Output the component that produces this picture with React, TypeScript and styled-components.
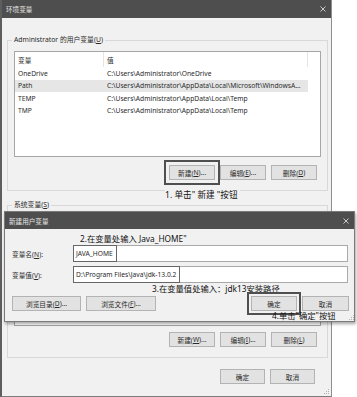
import styled, { createGlobalStyle } from 'styled-components';

const GlobalStyle = createGlobalStyle`
  html, body {
    margin: 0;
    padding: 0;
    background: #ffffff;
  }
  body {
    font-family: "Noto Sans", "Noto Sans CJK SC", sans-serif;
    color: #2a2a2a;
  }
`;

const Page = styled.div`
  position: relative;
  width: 357px;
  height: 397px;
  overflow: hidden;
  background: #ffffff;
`;

const Window = styled.div`
  width: 332px;
  height: 397px;
  box-sizing: border-box;
  border-left: 2px solid #5e5e5e;
  border-right: 1px solid #8f8f8f;
  border-bottom: 1px solid #7c7c7c;
  background: #f1f1f1;
  display: flex;
  flex-direction: column;
`;

const TitleBar = styled.div<{ $height: number }>`
  flex: none;
  height: ${(p) => p.$height}px;
  background: #4e4e4e;
  color: #e6e6e6;
  font-size: 6.6px;
  display: flex;
  align-items: center;
  justify-content: space-between;
  padding: 0 5px 0 4px;
`;

const Body = styled.div`
  display: flex;
  flex-direction: column;
  padding: 17px 3px 0 5px;
`;

const Group = styled.fieldset<{ $gap?: number }>`
  margin: ${(p) => p.$gap ?? 0}px 0 0 0;
  padding: 0 6px 10px 6px;
  border: 1px solid #d8d8d8;
  min-width: 0;
`;

const Legend = styled.legend`
  font-size: 6.8px;
  line-height: 10px;
  padding: 0 2px;
  margin-left: -2px;
  color: #2a2a2a;
`;

const ListBox = styled.div<{ $height: number }>`
  margin-top: 6px;
  height: ${(p) => p.$height}px;
  border: 1px solid #a6a6a6;
  background: #ffffff;
  box-sizing: border-box;
`;

const ListRow = styled.div<{ $header?: boolean; $selected?: boolean }>`
  display: grid;
  grid-template-columns: 89px 204px;
  height: ${(p) => (p.$header ? 15 : 12.5)}px;
  align-items: center;
  font-size: 6.7px;
  background: ${(p) => (p.$selected ? '#e6e6e6' : 'transparent')};
  width: 293px;
`;

const Cell = styled.div<{ $divider?: boolean }>`
  height: 100%;
  display: flex;
  align-items: center;
  padding-left: 3px;
  white-space: nowrap;
  overflow: hidden;
  border-right: ${(p) => (p.$divider ? '1px solid #e4e4e4' : 'none')};
`;

const ButtonRow = styled.div<{ $top: number; $right?: number }>`
  display: flex;
  justify-content: flex-end;
  gap: 5px;
  margin-top: ${(p) => p.$top}px;
  padding-right: ${(p) => p.$right ?? 4}px;
`;

const Button = styled.div<{ $width?: number; $focus?: number }>`
  width: ${(p) => p.$width ?? 46}px;
  height: 15px;
  box-sizing: border-box;
  border: 1px solid #b3b3b3;
  background: #e2e2e2;
  font-size: 6.7px;
  display: flex;
  align-items: center;
  justify-content: center;
  white-space: nowrap;
  color: #2a2a2a;
  outline: ${(p) => (p.$focus !== undefined ? '2px solid #4f4f4f' : 'none')};
  outline-offset: ${(p) => p.$focus ?? 0}px;
`;

const Dialog = styled.div`
  position: absolute;
  left: 4px;
  top: 211px;
  width: 351px;
  height: 111px;
  box-sizing: border-box;
  border: 1px solid #7a7a7a;
  background: #f1f1f1;
  box-shadow: 1px 2px 3px rgba(0, 0, 0, 0.35);
  display: flex;
  flex-direction: column;
`;

const DialogBody = styled.div`
  display: flex;
  flex-direction: column;
  padding: 0 5px 0 7px;
`;

const Note = styled.div<{ $left: number; $height: number; $top?: number }>`
  height: ${(p) => p.$height}px;
  line-height: ${(p) => p.$height}px;
  margin-top: ${(p) => p.$top ?? 0}px;
  padding-left: ${(p) => p.$left}px;
  font-size: 8.3px;
  color: #111111;
  white-space: nowrap;
`;

const FieldRow = styled.div<{ $top: number }>`
  display: flex;
  align-items: center;
  height: 17px;
  margin-top: ${(p) => p.$top}px;
`;

const FieldLabel = styled.div`
  width: 61px;
  font-size: 6.7px;
`;

const Input = styled.div`
  width: 275px;
  height: 17px;
  box-sizing: border-box;
  border: 1px solid #a9a9a9;
  background: #ffffff;
  font-size: 6.7px;
  display: flex;
  align-items: stretch;
`;

const Marked = styled.span`
  display: flex;
  align-items: center;
  padding: 0 3px 0 2px;
  outline: 1.5px solid #666666;
  outline-offset: 0;
  white-space: nowrap;
`;

const DialogButtons = styled.div`
  display: flex;
  align-items: center;
  gap: 5px;
  margin-top: 2px;
`;

const Spacer = styled.div`
  flex: 1;
`;

const BottomNote = styled.div`
  position: absolute;
  left: 165px;
  top: 189px;
  font-size: 8.6px;
  line-height: 12px;
  color: #111111;
  background: #f1f1f1;
  padding-right: 2px;
  white-space: nowrap;
`;

const Grip = styled.svg`
  position: absolute;
`;

const Close = () => (
  <svg width="6" height="6" viewBox="0 0 6 6">
    <path d="M0.5 0.5 L5.5 5.5 M5.5 0.5 L0.5 5.5" stroke="#d8d8d8" strokeWidth="0.9" />
  </svg>
);

const GripDots = ({ x, y }: { x: number; y: number }) => (
  <Grip width="6" height="6" viewBox="0 0 6 6" style={{ left: x, top: y }}>
    <rect x="4" y="0" width="1" height="1" fill="#b0b0b0" />
    <rect x="2" y="2" width="1" height="1" fill="#b0b0b0" />
    <rect x="4" y="2" width="1" height="1" fill="#b0b0b0" />
    <rect x="0" y="4" width="1" height="1" fill="#b0b0b0" />
    <rect x="2" y="4" width="1" height="1" fill="#b0b0b0" />
    <rect x="4" y="4" width="1" height="1" fill="#b0b0b0" />
  </Grip>
);

const userVars = [
  { name: 'OneDrive', value: 'C:\\Users\\Administrator\\OneDrive' },
  { name: 'Path', value: 'C:\\Users\\Administrator\\AppData\\Local\\Microsoft\\WindowsA...' },
  { name: 'TEMP', value: 'C:\\Users\\Administrator\\AppData\\Local\\Temp' },
  { name: 'TMP', value: 'C:\\Users\\Administrator\\AppData\\Local\\Temp' },
];

const App = () => {
  return (
    <Page>
      <GlobalStyle />
      <Window>
        <TitleBar $height={18}>
          <span>环境变量</span>
          <Close />
        </TitleBar>
        <Body>
          <Group>
            <Legend>
              Administrator 的用户变量(<u>U</u>)
            </Legend>
            <ListBox $height={106}>
              <ListRow $header>
                <Cell $divider>变量</Cell>
                <Cell $divider>值</Cell>
              </ListRow>
              {userVars.map((v) => (
                <ListRow key={v.name} $selected={v.name === 'Path'}>
                  <Cell>{v.name}</Cell>
                  <Cell>{v.value}</Cell>
                </ListRow>
              ))}
            </ListBox>
            <ButtonRow $top={8}>
              <Button $focus={3}>
                新建(<u>N</u>)...
              </Button>
              <Button>
                编辑(<u>E</u>)...
              </Button>
              <Button>
                删除(<u>D</u>)
              </Button>
            </ButtonRow>
          </Group>
          <Group $gap={9}>
            <Legend>
              系统变量(<u>S</u>)
            </Legend>
            <ListBox $height={110} />
            <ButtonRow $top={6}>
              <Button>
                新建(<u>W</u>)...
              </Button>
              <Button>
                编辑(<u>I</u>)...
              </Button>
              <Button>
                删除(<u>L</u>)
              </Button>
            </ButtonRow>
          </Group>
          <ButtonRow $top={11} $right={13}>
            <Button $width={45}>确定</Button>
            <Button $width={45}>取消</Button>
          </ButtonRow>
        </Body>
      </Window>
      <GripDots x={324} y={389} />

      <BottomNote>1. 单击" 新建 "按钮</BottomNote>

      <Dialog>
        <TitleBar $height={17}>
          <span>新建用户变量</span>
          <Close />
        </TitleBar>
        <DialogBody>
          <Note $left={68} $height={12} $top={4}>
            2.在变量处输入 Java_HOME"
          </Note>
          <FieldRow $top={0}>
            <FieldLabel>
              变量名(<u>N</u>):
            </FieldLabel>
            <Input>
              <Marked>JAVA_HOME</Marked>
            </Input>
          </FieldRow>
          <FieldRow $top={4}>
            <FieldLabel>
              变量值(<u>V</u>):
            </FieldLabel>
            <Input>
              <Marked>D:\Program Files\Java\jdk-13.0.2</Marked>
            </Input>
          </FieldRow>
          <Note $left={140} $height={10} $top={1}>
            3.在变量值处输入：jdk13安装路径
          </Note>
          <DialogButtons>
            <Button $width={69}>
              浏览目录(<u>D</u>)...
            </Button>
            <Button $width={70}>
              浏览文件(<u>F</u>)...
            </Button>
            <Spacer />
            <Button $width={46} $focus={2}>
              确定
            </Button>
            <Button $width={47}>取消</Button>
          </DialogButtons>
          <Note $left={260} $height={9} $top={0}>
            4.单击"确定"按钮
          </Note>
        </DialogBody>
        <GripDots x={344} y={103} />
      </Dialog>
    </Page>
  );
};

export default App;
